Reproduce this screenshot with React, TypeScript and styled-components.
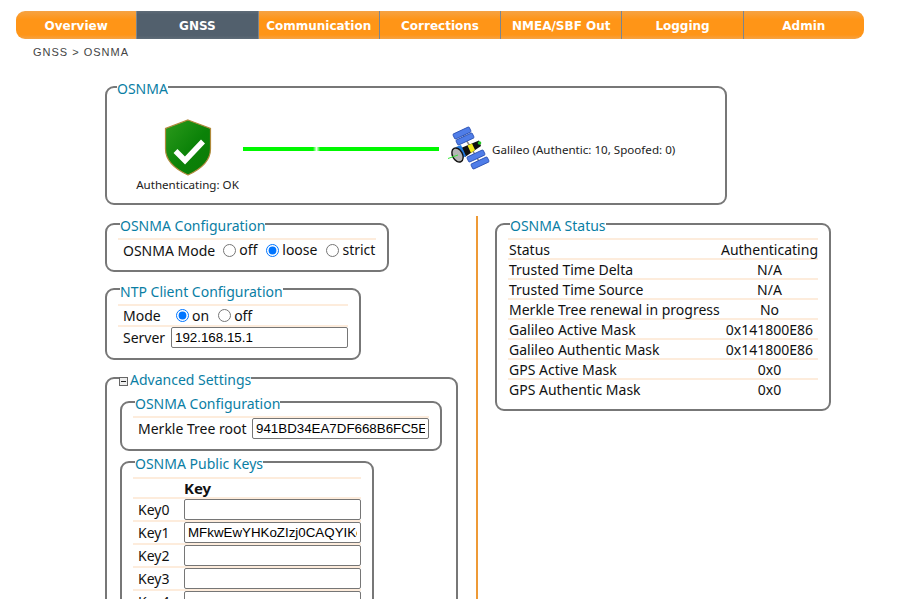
import React from 'react';
import styled, { createGlobalStyle } from 'styled-components';

const GlobalStyle = createGlobalStyle`
  html, body {
    margin: 0;
    height: 599px;
    overflow: hidden;
    background: #fff;
  }
  body {
    color: #111;
    font-family: 'Noto Sans', Tahoma, sans-serif;
    font-size: 14px;
  }
`;

const Page = styled.div`
  padding: 11px 0 0 16px;
`;

const Nav = styled.nav`
  display: flex;
  width: 848px;
  height: 28px;
  border-radius: 9px;
  overflow: hidden;
`;

const Tab = styled.a<{ $active?: boolean }>`
  flex: 1;
  display: flex;
  align-items: center;
  justify-content: center;
  padding-top: 1px;
  color: #fff;
  font-family: 'DejaVu Sans', Verdana, sans-serif;
  font-size: 12px;
  font-weight: bold;
  border-left: 1px solid #7a8590;
  background: ${p =>
    p.$active
      ? 'linear-gradient(#5f6c78 0, #52606d 12%, #52606d 88%, #5f6c78 100%)'
      : 'linear-gradient(#f5a345 0, #ff9517 30%, #ff9517 85%, #f5a345 100%)'};

  &:first-child {
    border-left: 0;
  }
`;

const Crumbs = styled.div`
  margin: 7px 0 0 17px;
  height: 13px;
  line-height: 13px;
  color: #444;
  font-family: 'Liberation Sans', Arial, sans-serif;
  font-size: 11px;
  letter-spacing: 1px;
`;

const Content = styled.main`
  margin: 17px 0 0 89px;
  width: 726px;
`;

const Box = styled.fieldset<{ $w?: number; $gap?: number; $pt?: number; $pb?: number; $pl?: number }>`
  width: ${p => (p.$w ? `${p.$w}px` : 'auto')};
  margin: ${p => p.$gap ?? 0}px 0 0;
  padding: ${p => p.$pt ?? 4}px 11px ${p => p.$pb ?? 10}px ${p => p.$pl ?? 11}px;
  min-width: 0;
  box-sizing: border-box;
  border: 2px solid #777;
  border-radius: 9px;
`;

const Legend = styled.legend<{ $x?: number }>`
  padding: 4px 0 0;
  margin-left: ${p => p.$x ?? 2}px;
  color: #0a7ea4;
  font-size: 14px;
  line-height: 17px;
`;

const DiagramBox = styled(Box)`
  height: 129px;
`;

const Diagram = styled.div`
  display: flex;
  align-items: flex-start;
  padding: 22px 0 0 19px;
`;

const AuthBlock = styled.div`
  display: flex;
  flex-direction: column;
  align-items: center;
  width: 101px;
  font-size: 11.6px;
  line-height: 14px;
  color: #222;
`;

const Caption = styled.span`
  margin-top: 2px;
  white-space: nowrap;
`;

const Link = styled.div`
  width: 196px;
  height: 4px;
  margin: 28px 0 0 5px;
  background: linear-gradient(90deg, #00f800 0 70px, #e8ffe8 73.5px, #00f800 77px 100%);
`;

const SatLabel = styled.span`
  margin: 24px 0 0 2px;
  font-size: 11.6px;
  line-height: 14px;
  color: #222;
  white-space: nowrap;
`;

const Sat = styled.svg`
  display: block;
  margin: 6px 0 0 9px;
`;

const Columns = styled.div`
  display: flex;
  margin-top: 8px;
`;

const Left = styled.div`
  width: 371px;
  flex: none;
`;

const Divider = styled.div`
  width: 2px;
  height: 400px;
  margin-top: 3px;
  flex: none;
  background: #ee9a36;
`;

const Right = styled.div`
  margin-left: 17px;
`;

const Table = styled.table`
  border-collapse: collapse;
  width: 100%;
`;

const Row = styled.tr`
  border-top: 2px solid #fdecdc;
`;

const Cell = styled.td<{ $center?: boolean; $pad?: number; $w?: number }>`
  box-sizing: border-box;
  width: ${p => (p.$w ? `${p.$w}px` : 'auto')};
  padding: 2px 0 0 ${p => p.$pad ?? 0}px;
  height: 18px;
  line-height: 16px;
  white-space: nowrap;
  text-align: ${p => (p.$center ? 'center' : 'left')};
`;

const InputCell = styled(Cell)`
  padding-top: 0;
  line-height: 18px;
`;

const HeadCell = styled(Cell).attrs({ as: 'th' })`
  padding-top: 0;
  line-height: 18px;
  font-weight: bold;
  font-size: 15px;
`;

const RadioLabel = styled.label`
  display: inline-flex;
  align-items: center;
  margin: 0 4px 0 5px;

  &:last-child {
    margin-right: 0;
  }
`;

const Radio = styled.input.attrs({ type: 'radio' })`
  margin: 0 3px 0 0;
  width: 13px;
  height: 13px;
`;

const TextInput = styled.input.attrs({ type: 'text', readOnly: true })`
  display: block;
  box-sizing: border-box;
  width: 177px;
  height: 21px;
  margin: 0;
  padding: 1px 3px;
  border: 1px solid #767676;
  border-radius: 2px;
  background: #fff;
  color: #000;
  font-family: 'Liberation Sans', Arial, sans-serif;
  font-size: 13.33px;
`;

const Toggle = styled.svg`
  margin-right: 2px;
  vertical-align: -1px;
`;

const statusRows = [
  ['Status', 'Authenticating'],
  ['Trusted Time Delta', 'N/A'],
  ['Trusted Time Source', 'N/A'],
  ['Merkle Tree renewal in progress', 'No'],
  ['Galileo Active Mask', '0x141800E86'],
  ['Galileo Authentic Mask', '0x141800E86'],
  ['GPS Active Mask', '0x0'],
  ['GPS Authentic Mask', '0x0'],
];

const keys = ['', 'MFkwEwYHKoZIzj0CAQYIKoZIzj0DAQcDQgAE', '', '', ''];

const Shield = () => (
  <svg width="48" height="57" viewBox="0 0 48 57">
    <defs>
      <linearGradient id="shieldFill" x1="0" y1="0" x2="1" y2="1">
        <stop offset="0" stopColor="#2c9a1c" />
        <stop offset="0.55" stopColor="#0b8208" />
        <stop offset="1" stopColor="#0c7a06" />
      </linearGradient>
    </defs>
    <path
      d="M24 1 L46.5 9.5 V30 C46.5 42 36 50.5 24 56 C12 50.5 1.5 42 1.5 30 V9.5 Z"
      fill="url(#shieldFill)"
      stroke="#b08a3c"
      strokeWidth="1.2"
    />
    <path d="M11.5 32 L21 41.5 L39 22.5" fill="none" stroke="#fff" strokeWidth="5.5" />
  </svg>
);

const SatPanel = ({ x, y }: { x: number; y: number }) => (
  <rect
    x={x - 9}
    y={y - 2.8}
    width="18"
    height="5.6"
    rx="1"
    transform={`rotate(-25 ${x} ${y})`}
    fill="#4f7de8"
    stroke="#2a4fb0"
    strokeWidth="0.8"
  />
);

const Satellite = () => (
  <Sat width="42" height="45" viewBox="0 0 42 45">
    <path d="M14 8 L32 38" stroke="#888" strokeWidth="1.5" />
    <SatPanel x={14} y={8} />
    <SatPanel x={17} y={14} />
    <SatPanel x={28} y={31} />
    <SatPanel x={32} y={38} />
    <path d="M13 23 L31 15.5 L33 21 L17 32 Z" fill="#111" />
    <path d="M19.5 20.5 L24 18.5 L27 25 L23 28 Z" fill="#f2ea1e" />
    <path d="M8 22 L13 20 L18 31 L13 34 Z" fill="#1f78e0" />
    <ellipse cx="9.5" cy="30" rx="5" ry="7.5" transform="rotate(-28 9.5 30)" fill="#b5b5b5" stroke="#111" strokeWidth="1.4" />
    <circle cx="31.5" cy="18" r="1.8" fill="#22c522" />
    <path d="M0 33.5 L10 30" stroke="#38e838" strokeWidth="1" />
  </Sat>
);

const App = () => (
  <Page>
    <GlobalStyle />
    <Nav>
      <Tab>Overview</Tab>
      <Tab $active>GNSS</Tab>
      <Tab>Communication</Tab>
      <Tab>Corrections</Tab>
      <Tab>NMEA/SBF Out</Tab>
      <Tab>Logging</Tab>
      <Tab>Admin</Tab>
    </Nav>
    <Crumbs>GNSS &gt; OSNMA</Crumbs>
    <Content>
      <DiagramBox $w={622} $pt={0} $pb={0}>
        <Legend $x={-1}>OSNMA</Legend>
        <Diagram>
          <AuthBlock>
            <Shield />
            <Caption>Authenticating: OK</Caption>
          </AuthBlock>
          <Link />
          <Satellite />
          <SatLabel>Galileo (Authentic: 10, Spoofed: 0)</SatLabel>
        </Diagram>
      </DiagramBox>
      <Columns>
        <Left>
          <Box $w={284}>
            <Legend>OSNMA Configuration</Legend>
            <Table>
              <tbody>
                <Row>
                  <Cell $pad={5} $w={101}>OSNMA Mode</Cell>
                  <Cell $w={158}>
                    <RadioLabel><Radio />off</RadioLabel>
                    <RadioLabel><Radio defaultChecked />loose</RadioLabel>
                    <RadioLabel><Radio />strict</RadioLabel>
                  </Cell>
                </Row>
              </tbody>
            </Table>
          </Box>
          <Box $w={256} $gap={7}>
            <Legend>NTP Client Configuration</Legend>
            <Table>
              <tbody>
                <Row>
                  <Cell $pad={5} $w={53}>Mode</Cell>
                  <Cell>
                    <RadioLabel><Radio defaultChecked />on</RadioLabel>
                    <RadioLabel><Radio />off</RadioLabel>
                  </Cell>
                </Row>
                <Row>
                  <InputCell $pad={5}>Server</InputCell>
                  <InputCell><TextInput value="192.168.15.1" /></InputCell>
                </Row>
              </tbody>
            </Table>
          </Box>
          <Box $w={353} $gap={7} $pt={3} $pl={13}>
            <Legend $x={-1}>
              <Toggle width="9" height="9" viewBox="0 0 9 9">
                <rect x="0.5" y="0.5" width="8" height="8" fill="#eee" stroke="#666" />
                <rect x="2" y="4" width="5" height="1" fill="#222" />
              </Toggle>
              Advanced Settings
            </Legend>
            <Box $w={322}>
              <Legend>OSNMA Configuration</Legend>
              <Table>
                <tbody>
                  <Row>
                    <InputCell $pad={5} $w={119}>Merkle Tree root</InputCell>
                    <InputCell><TextInput value="941BD34EA7DF668B6FC5EF3C1D0A7F21" /></InputCell>
                  </Row>
                </tbody>
              </Table>
            </Box>
            <Box $w={254} $pt={5}>
              <Legend>OSNMA Public Keys</Legend>
              <Table>
                <tbody>
                  <Row>
                    <Cell $w={51} />
                    <HeadCell>Key</HeadCell>
                  </Row>
                  {keys.map((value, i) => (
                    <Row key={i}>
                      <InputCell $pad={5}>Key{i}</InputCell>
                      <InputCell><TextInput value={value} /></InputCell>
                    </Row>
                  ))}
                </tbody>
              </Table>
            </Box>
          </Box>
        </Left>
        <Divider />
        <Right>
          <Box $w={336} $pb={11}>
            <Legend>OSNMA Status</Legend>
            <Table>
              <tbody>
                {statusRows.map(([name, value]) => (
                  <Row key={name}>
                    <Cell $pad={1}>{name}</Cell>
                    <Cell $center $w={97}>{value}</Cell>
                  </Row>
                ))}
              </tbody>
            </Table>
          </Box>
        </Right>
      </Columns>
    </Content>
  </Page>
);

export default App;
